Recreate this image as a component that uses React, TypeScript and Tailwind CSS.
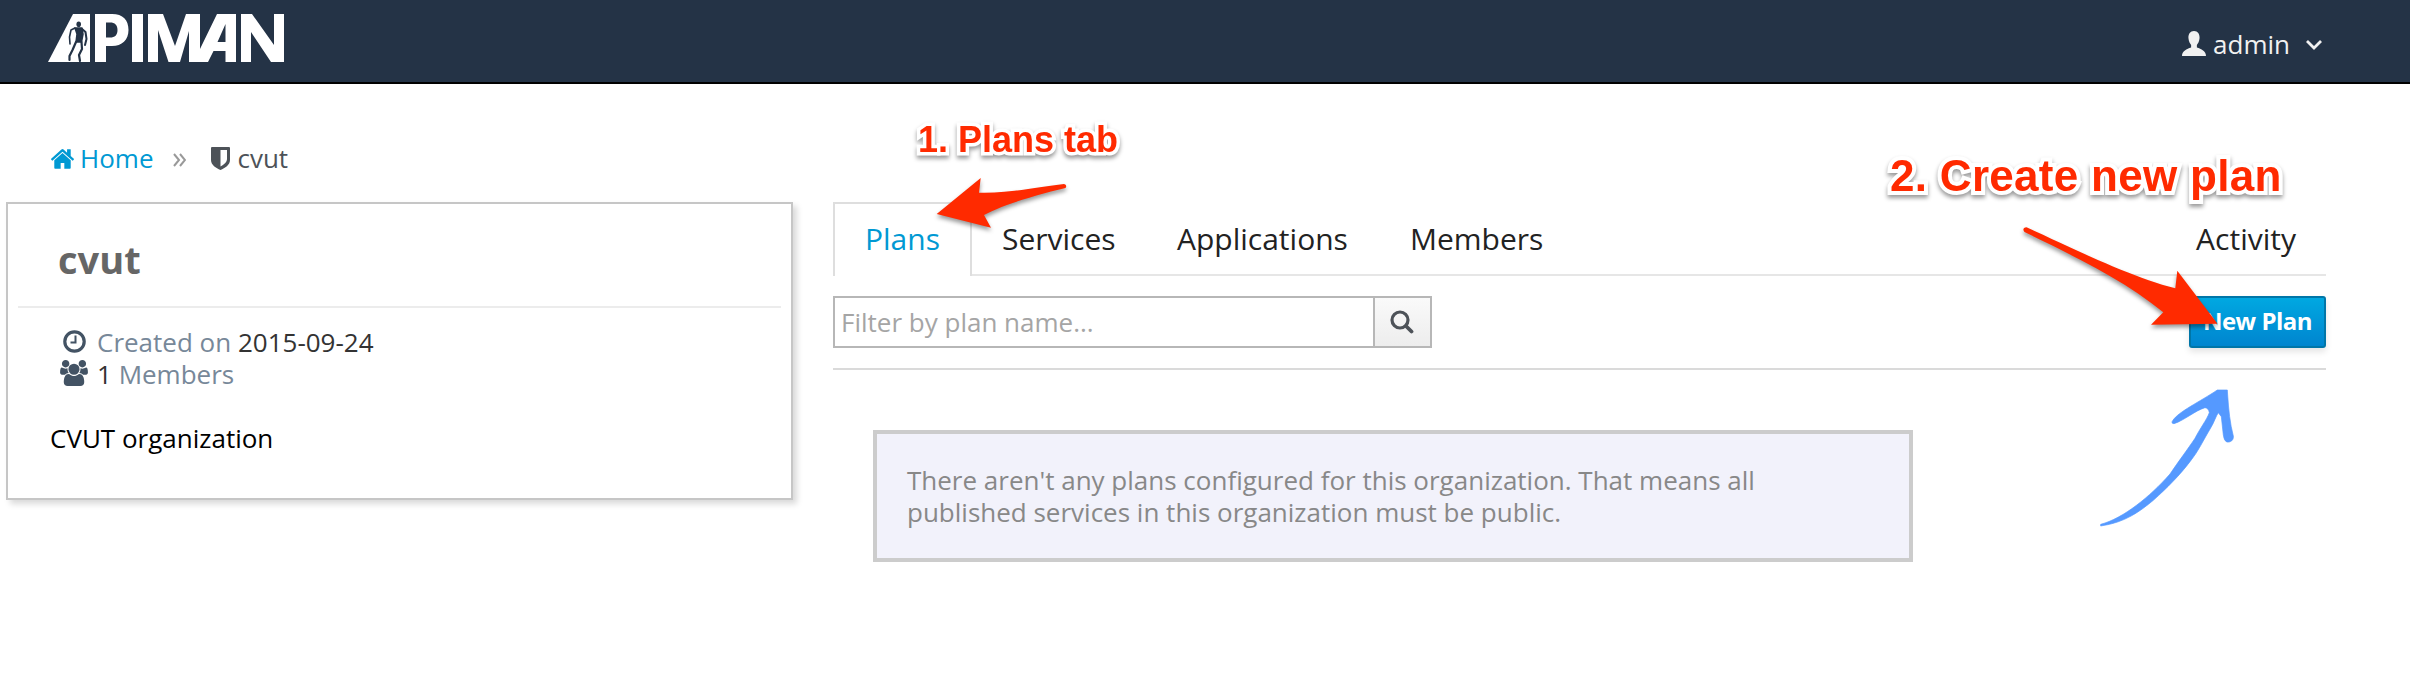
import React from "react";

function Logo() {
  return (
    <svg width="238" height="50" viewBox="48 13 238 50" className="block" fill="#fff">
      <path d="M73 14H90V62H48Z" />
      <path fillRule="evenodd" d="M95 14H112C123 14 128.500 20 128.500 30C128.500 40 122 46 112 46H106V62H95ZM106 22.500V37.500H110C115 37.500 117.500 35 117.500 30C117.500 25 115 22.500 110 22.500Z" />
      <path d="M132 14H143V62H132Z" />
      <path d="M148 62V14H163L175 46L186 14H200V49L217 14H236V62H225.500V51H213.500L208 62H189V31L180 62H168.500L158 30V62ZM217.500 42H225.500V24Z" fillRule="evenodd" />
      <path d="M241 62V14H252L274 45V14H284V62H271L251 32V62Z" />
      <g fill="none" stroke="#243346" strokeLinecap="round" strokeLinejoin="round">
        <ellipse cx="78.700" cy="24.200" rx="2.300" ry="2.800" fill="#243346" stroke="none" />
        <path d="M75 28L71 30L69.500 37L70 44" strokeWidth="1.600" />
        <path d="M82 29L85.500 32L86.500 39L85 45" strokeWidth="2" />
        <path d="M75 28H82L83 34L81.500 42H76L77 34Z" strokeWidth="1.500" fill="#243346" />
        <path d="M76 42L72.500 50L69.500 56V60" strokeWidth="2.200" />
        <path d="M81.500 42L82 49L79 55L80 61" strokeWidth="2.200" />
      </g>
    </svg>
  );
}

function HomeIcon() {
  return (
    <svg width="23" height="20" viewBox="89 247 1614 1300" preserveAspectRatio="none" fill="#0099d3" className="mr-[6px] mt-[2px]">
      <path d="M1472 992v480q0 26-19 45t-45 19h-384v-384h-256v384h-384q-26 0-45-19t-19-45v-480q0-1 .5-3t.5-3l575-474 575 474q1 2 1 6zm223-69l-62 74q-8 9-21 11h-3q-13 0-21-7l-692-577-692 577q-12 8-24 7-13-2-21-11l-62-74q-8-10-7-23.500t11-21.500l719-599q32-26 76-26t76 26l244 204v-195q0-14 9-23t23-9h192q14 0 23 9t9 23v408l219 182q10 8 11 21.500t-7 23.500z" />
    </svg>
  );
}

function UsersIcon() {
  return (
    <svg width="28" height="26" viewBox="0 0 1920 1792" fill="#435364" className="mr-[9px] -mt-[3px]">
      <path d="M593 896q-162 5-265 128h-134q-82 0-138-40.500t-56-118.500q0-353 124-353 6 0 43.500 21t97.500 42.500 119 21.500q67 0 133-23-5 37-5 66 0 139 81 256zm1071 637q0 120-73 189.500t-194 69.500h-874q-121 0-194-69.500t-73-189.500q0-53 3.500-103.500t14-109 26.500-108.500 43-97.500 62-81 85.500-53.500 111.500-20q10 0 43 21.500t73 48 107 48 135 21.500 135-21.500 107-48 73-48 43-21.500q61 0 111.500 20t85.500 53.500 62 81 43 97.500 26.500 108.500 14 109 3.500 103.500zm-1024-1277q0 106-75 181t-181 75-181-75-75-181 75-181 181-75 181 75 75 181zm704 384q0 159-112.500 271.500t-271.500 112.500-271.500-112.500-112.500-271.500 112.500-271.500 271.500-112.500 271.500 112.500 112.500 271.500zm576 225q0 78-56 118.500t-138 40.500h-134q-103-123-265-128 81-117 81-256 0-29-5-66 66 23 133 23 59 0 119-21.500t97.500-42.500 43.500-21q124 0 124 353zm-128-609q0 106-75 181t-181 75-181-75-75-181 75-181 181-75 181 75 75 181z" />
    </svg>
  );
}

function Annotations() {
  return (
    <div className="pointer-events-none absolute inset-0 whitespace-nowrap font-['Liberation_Sans',sans-serif] font-bold text-[#ff2a00]">
      <svg width="2410" height="684" viewBox="0 0 2410 684" className="absolute inset-0">
        <g fill="#ff2a00" className="drop-shadow-[0_3px_2px_rgba(0,0,0,0.4)]">
          <path d="M936.700 214L980.700 178L979 192.700C1005 193.500 1030 188.500 1064 184Q1067.500 185 1065.500 188C1035 195 1000 206 984 215L991 227.700Z" />
          <path d="M2026.500 227.300C2070 247 2130 277 2175.300 288.300L2177.300 270.700L2217.500 323.700L2151 324.700L2163.300 312.300C2125 281 2080 259 2024.500 232Q2021.500 228 2026.500 227.300Z" />
        </g>
        <path transform="translate(2080 380) scale(0.3333)" fill="#5599ff" stroke="#5599ff" strokeWidth="2" d="M62 433C130 415 210 350 270 282C295 245 325 205 345 175C360 145 380 120 388 98Q386 84 375 83C345 92 315 120 282 131Q272 130 278 122C295 95 360 65 412 30H442L443 45C446 90 450 130 460 168C462 180 452 188 440 186Q432 182 430 165L424 110L415 98C408 108 402 128 392 144C370 180 355 215 330 245C300 285 260 325 220 361C180 394 135 428 62 438Z" />
      </svg>
      <div className="absolute left-[918px] top-[120px] text-[36px] leading-[40px] drop-shadow-[0_3px_2px_rgba(0,0,0,0.4)]">
        <span className="[-webkit-text-stroke:7px_white] [paint-order:stroke_fill]">1. Plans tab</span>
      </div>
      <div className="absolute left-[1890px] top-[151px] text-[44px] leading-[50px] tracking-[0.3px] drop-shadow-[0_3px_2px_rgba(0,0,0,0.4)]">
        <span className="[-webkit-text-stroke:8px_white] [paint-order:stroke_fill]">2. Create new plan</span>
      </div>
    </div>
  );
}

export default function App() {
  return (
    <div className="relative h-[684px] w-[2410px] overflow-hidden bg-white font-['Open_Sans',sans-serif] text-[26px] leading-8 text-black">
      <header className="flex h-[84px] items-start justify-between border-b-2 border-black bg-[#243346] pl-12 pr-[87px]">
        <div className="pt-[13px]"><Logo /></div>
        <div className="flex items-center pt-7 text-[#f1f1f1]">
          <svg width="24" height="26" viewBox="0 0 25 26" preserveAspectRatio="none" fill="currentColor" className="mr-[7px]">
            <path d="M12.500 0C16.500 0 18.500 3 18.300 7C18 11 16.500 12.500 15.500 14V16.500C20 18 25 20 25 25H0C0 20 5 18 9.500 16.500V14C8.500 12.500 7 11 6.700 7C6.500 3 8.500 0 12.500 0Z" />
          </svg>
          <span>admin</span>
          <svg width="18" height="12" viewBox="0 0 18 12" fill="none" stroke="currentColor" strokeWidth="2.800" className="ml-[15px] mt-[2px]"><path d="M2 2L9 9L16 2" /></svg>
        </div>
      </header>
      <nav className="mt-[58px] flex h-8 items-center pl-[51px] text-[#4d5258]">
        <HomeIcon />
        <span className="text-[#0099d3]">Home</span>
        <svg width="13" height="14" viewBox="0 0 13 14" fill="none" stroke="#999" strokeWidth="2" className="ml-[20px] mr-[25px] mt-1"><path d="M1 1L6 7L1 13M7 1L12 7L7 13" /></svg>
        <svg width="19" height="23" viewBox="0 0 19 23" className="mr-[7px]" fill="currentColor" fillRule="evenodd"><path d="M1 0H18Q19 0 19 1V13C19 18 14 21 9.500 23C5 21 0 18 0 13V1Q0 0 1 0ZM9.500 3V19.500C13 17.500 16 15 16 12V3Z" /></svg>
        <span>cvut</span>
      </nav>
      <div className="mt-7 flex">
        <section className="ml-[6px] h-[298px] w-[787px] border-2 border-[#c6c6c6] px-[10px] shadow-[4px_4px_6px_rgba(0,0,0,0.15)]">
          <h1 className="h-[104px] border-b-2 border-[#ececec] pl-10 pt-[33px] text-[38px] font-bold leading-[44px] text-[#666]">cvut</h1>
          <div className="pl-[42px] pt-[18px] text-[#778899]">
            <div className="flex h-8 items-center">
              <svg width="23" height="23" viewBox="0 0 23 23" fill="none" stroke="#435364" className="-mt-[2px] ml-[3px] mr-[11px]"><circle cx="11.500" cy="11.500" r="9.700" strokeWidth="3.200" /><path d="M12.500 5.500V12.500H7.500" strokeWidth="2" /></svg>
              <span>Created on <span className="text-[#333]">2015-09-24</span></span>
            </div>
            <div className="flex h-8 items-center">
              <UsersIcon />
              <span><span className="text-[#333]">1</span> Members</span>
            </div>
          </div>
          <p className="mt-8 pl-8">CVUT organization</p>
        </section>
        <main className="ml-10 w-[1493px]">
          <div className="flex h-[74px] items-stretch text-[30px] text-[#222]">
            <div className="w-[139px] border-2 border-b-0 border-[#dedede] pl-[30px] pt-[19px] text-[#0099d3]">Plans</div>
            <div className="flex grow border-b-2 border-[#e6e6e6] pt-[21px]">
              <span className="w-[175px] pl-[30px]">Services</span>
              <span className="w-[234px] pl-[30px]">Applications</span>
              <span className="pl-[29px]">Members</span>
              <span className="ml-auto mr-[30px]">Activity</span>
            </div>
          </div>
          <div className="flex h-[94px] items-start justify-between border-b-2 border-[#dadada] pt-5">
            <div className="flex h-[52px] border-2 border-[#b7b7b7]">
              <div className="w-[538px] pl-[6px] pt-2 text-[#a5a5a5]">Filter by plan name...</div>
              <div className="flex w-[57px] items-center justify-center border-l-2 border-[#b7b7b7] bg-gradient-to-b from-[#fafafa] to-[#ededed]">
                <svg width="24" height="24" viewBox="0 0 24 24" fill="none" stroke="#4d5258" strokeLinecap="round" className="-ml-[2px]"><circle cx="10" cy="10" r="8" strokeWidth="3.200" /><path d="M16 16L21.500 21.500" strokeWidth="3.800" /></svg>
              </div>
            </div>
            <button className="h-[52px] w-[137px] rounded-[3px] border-2 border-[#0076a8] bg-gradient-to-b from-[#00a8e1] to-[#0085cf] pb-[2px] text-[24px] font-bold leading-8 tracking-[-0.5px] text-white shadow-[0_4px_6px_rgba(3,3,3,0.1)]">New Plan</button>
          </div>
          <div className="ml-10 mt-[60px] h-[132px] w-[1040px] border-4 border-[#ccc] bg-[#f2f2fb] pl-[30px] pt-[30px] text-[#888]">
            There aren't any plans configured for this organization. That means all<br />published services in this organization must be public.
          </div>
        </main>
      </div>
      <Annotations />
    </div>
  );
}
